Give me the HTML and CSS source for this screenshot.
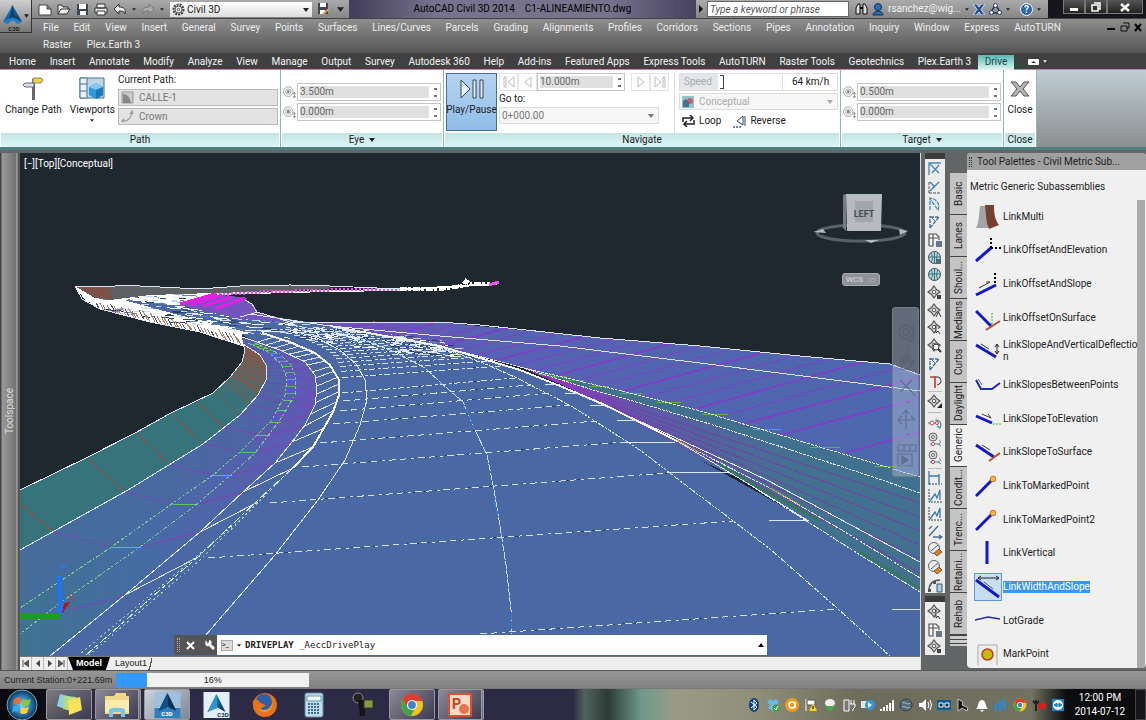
FILE: index.html
```
<!DOCTYPE html>
<html lang="en">
<head>
  <meta charset="UTF-8" />
  <meta name="viewport" content="width=device-width, initial-scale=1.0" />
  <title>AutoCAD Civil 3D 2014 - C1-ALINEAMIENTO.dwg</title>
  <link rel="stylesheet" href="styles.css">
</head>
<body>
  <svg class="sprite" aria-hidden="true">
    <defs>
      <linearGradient id="g-blue" x1="0" y1="0" x2="1" y2="1"><stop offset="0" stop-color="#3aa0e8"/><stop offset=".5" stop-color="#12619f"/><stop offset="1" stop-color="#06294f"/></linearGradient>
      <radialGradient id="g-orb"><stop offset="0" stop-color="#7cd4f5"/><stop offset=".6" stop-color="#2b78b0"/><stop offset="1" stop-color="#0d3357"/></radialGradient>
      <radialGradient id="g-fox"><stop offset="0" stop-color="#ffd54a"/><stop offset="1" stop-color="#e2600e"/></radialGradient>
    </defs>
    <symbol id="a-logo" viewBox="0 0 20 20"><path d="M10 0 20 18 10 13 0 18Z" fill="url(#g-blue)"/><path d="M10 0 13 15 10 13 7 15Z" fill="#0a3c70"/><path d="M0 18 10 13 20 18 15 20 10 16 5 20Z" fill="#1d7fc4"/></symbol>
    <symbol id="caret" viewBox="0 0 6 4"><path d="M0 0h6L3 4z" fill="currentColor"/></symbol>
    <symbol id="eye" viewBox="0 0 16 14"><g fill="none" stroke="#999"><circle cx="6" cy="6" r="5.500"/><circle cx="6" cy="6" r="3"/></g><circle cx="6" cy="6" r="1.600" fill="#777"/><path d="M13 7v6M11.500 9l1.500-2 1.500 2M11.500 11l1.500 2 1.500-2" fill="none" stroke="#888"/></symbol>
    <symbol id="s-diamond" viewBox="0 0 16 16"><path d="M7 1l2.500 3.500L13 7l-3.500 2.500L7 13 4.500 9.500 1 7l3.500-2.500z" fill="#d7dbe0" stroke="#555" stroke-width="1.200"/><circle cx="7" cy="7" r="1.800" fill="#fff" stroke="#555"/></symbol>
    <symbol id="s-line" viewBox="0 0 16 16"><path d="M2 14V3M2 14h12" stroke="#456" fill="none" stroke-dasharray="3 1"/><path d="M3 12 12 3M3 3l5 5" stroke="#3d79a8" stroke-width="1.300" fill="none"/></symbol>
    <symbol id="s-corner" viewBox="0 0 16 16"><path d="M2 14V2h12M3 3l9 9M5 12l7-8" stroke="#4684b4" stroke-width="1.300" fill="none"/></symbol>
    <symbol id="s-arc" viewBox="0 0 16 16"><path d="M3 14V2c8 1 10 8 8 12L3 3" stroke="#447ca8" stroke-width="1.200" fill="#dcecf7" stroke-dasharray="4 1"/></symbol>
    <symbol id="s-grid" viewBox="0 0 16 16"><path d="M2 14V2h7l3 3v3M2 6h9M6 2v12H2" fill="#f5f5f5" stroke="#555" stroke-width="1.200"/><path d="M9 9h6v6H9z" fill="#678"/></symbol>
    <symbol id="s-globe" viewBox="0 0 16 16"><circle cx="7.500" cy="7.500" r="6" fill="#aed6d4" stroke="#446" /><path d="M2 7h11M7.500 2v11M4 3c2 4 2 6 0 9M11 3c-2 4-2 6 0 9" stroke="#3b7680" fill="none"/></symbol>
    <symbol id="s-hook" viewBox="0 0 16 16"><path d="M3 3h5v11" stroke="#c33" stroke-width="1.600" fill="none"/><path d="M8 3c7-1 8 7 2 8" fill="none" stroke="#555" stroke-width="1.200"/></symbol>
    <symbol id="s-node" viewBox="0 0 16 16"><path d="M1 8h9M8 5c6 0 7 4 5 8l-3-2" stroke="#4583aa" stroke-width="1.200" fill="none"/><circle cx="5" cy="8" r="2" fill="#fff" stroke="#b44"/><circle cx="10" cy="8" r="1.500" fill="#fff" stroke="#b44"/></symbol>
    <symbol id="s-node2" viewBox="0 0 16 16"><circle cx="6" cy="5" r="4" fill="#ddd" stroke="#666"/><circle cx="6" cy="5" r="1.500" fill="#fff" stroke="#666"/><path d="M3 12h8c3 0 3-3 1-4M11 12l3 2" stroke="#4583aa" fill="none"/><circle cx="6" cy="12" r="1.600" fill="#fff" stroke="#b44"/></symbol>
    <symbol id="s-dim" viewBox="0 0 16 16"><path d="M2 1v14M12 4v9M2 6h10" stroke="#3d79a8" stroke-width="1.300" fill="none"/><path d="M2 14h13" stroke="#345" stroke-dasharray="2 1"/></symbol>
    <symbol id="s-dim2" viewBox="0 0 16 16"><path d="M2 1v13h13" stroke="#345" stroke-dasharray="2 1" fill="none"/><path d="M3 13 8 6l2 4 3-8v10" stroke="#3d79a8" stroke-width="1.300" fill="none"/></symbol>
    <symbol id="s-slant" viewBox="0 0 16 16"><path d="M2 12 11 2M2 5l3-3M6 13h9M12 11l3 2-3 2" stroke="#456f90" stroke-width="1.300" fill="none"/></symbol>
    <symbol id="s-flag" viewBox="0 0 16 16"><path d="M3 14V2M3 14 12 3M3 3h8" stroke="#456f90" stroke-width="1.300" fill="none" stroke-dasharray="4 1"/><path d="M4 3 8 7" stroke="#3d79a8"/></symbol>
    <symbol id="s-brush" viewBox="0 0 16 16"><circle cx="7" cy="7" r="5.500" fill="#eee" stroke="#666"/><path d="M4 10 11 4" stroke="#467"/><path d="M7 12l5-4 3 3-5 4z" fill="#d2862c" stroke="#853"/></symbol>
    <symbol id="s-calc" viewBox="0 0 16 16"><path d="M2 14C2 7 6 3 13 3" fill="none" stroke="#555" stroke-width="1.500"/><path d="M1 12h3v3H1zM6 4h3v3H6z" fill="#555"/><path d="M10 7h5v8h-5z" fill="#a9cee6" stroke="#357"/></symbol>
    <symbol id="win-a" viewBox="0 0 26 26"><path d="M0 0h26v26H0z" fill="#e4eef6"/><path d="M13 2 22 20 13 15 4 20Z" fill="url(#g-blue)"/><path d="M13 2 14 16 4 20Z" fill="#2b94cf"/></symbol>
    <symbol id="win-b" viewBox="0 0 26 26"><path d="M0 0h26v26H0z" fill="#9fc0dc"/><path d="M0 16h26v10H0z" fill="#2f7fc0"/><path d="M13 1 22 19 13 15 4 19Z" fill="#0b3358"/><path d="M13 1 14 15 4 19Z" fill="#134e83"/></symbol>
    <symbol id="chrome" viewBox="0 0 24 24"><circle cx="12" cy="12" r="11" fill="#f2c51d"/><path d="M2.500 6.500A11 11 0 0 1 22.500 8H12L7 14z" fill="#dc3d2c"/><path d="M2.500 6.500 7.500 14.500 14 17l-3 6A11 11 0 0 1 2.500 6.500" fill="#40a34b"/><circle cx="12" cy="12" r="5" fill="#fff"/><circle cx="12" cy="12" r="3.900" fill="#3b82cf"/></symbol>
  </svg>

  <header class="titlebar">
    <button class="app-button" aria-label="Application menu">
      <svg width="19" height="21"><use href="#a-logo"/></svg><b>C3D</b>
      <svg class="app-caret" width="5" height="4"><use href="#caret"/></svg>
    </button>
    <div class="quick-access">
      <button aria-label="New"><svg width="14" height="13" viewBox="0 0 14 13"><path d="M1 2h8l4 4v6H1zM9 2v4h4" fill="#fff" stroke="#444"/></svg></button>
      <button aria-label="Open"><svg width="14" height="13" viewBox="0 0 14 13"><path d="M1 11V2h4l1 2h5v2M1 11l3-5h9l-3 5z" fill="#eee" stroke="#333"/></svg></button>
      <button aria-label="Save"><svg width="13" height="13" viewBox="0 0 13 13"><path d="M1 1h11v11H1z" fill="#3c4650"/><path d="M3 1h7v5H3zM4 8h6v4H4z" fill="#fff"/></svg></button>
      <button aria-label="Plot"><svg width="14" height="13" viewBox="0 0 14 13"><path d="M3 1h8v4H3zM1 5h12v5H1z" fill="#eee" stroke="#333"/><path d="M3 8h8v4H3z" fill="#fff" stroke="#333"/></svg></button>
      <button aria-label="Undo"><svg width="14" height="12" viewBox="0 0 14 12"><path d="M1 6l5-5v3c5 0 7 2 6 7-1-3-3-3-6-3v3z" fill="#eee" stroke="#333"/></svg></button>
      <svg width="4" height="3"><use href="#caret"/></svg>
      <button aria-label="Redo"><svg width="14" height="12" viewBox="0 0 14 12"><path d="M13 6 8 1v3C3 4 1 6 2 11c1-3 3-3 6-3v3z" fill="#aaa" stroke="#777"/></svg></button>
      <svg width="4" height="3"><use href="#caret"/></svg>
    </div>
    <div class="workspace">
      <svg width="13" height="13" viewBox="0 0 13 13"><circle cx="6.500" cy="6.500" r="5" fill="none" stroke="#444" stroke-width="2" stroke-dasharray="2 1"/><circle cx="6.500" cy="6.500" r="3.500" fill="#fff" stroke="#444"/><circle cx="6.500" cy="6.500" r="1.200" fill="none" stroke="#444"/></svg>
      <select aria-label="Workspace"><option>Civil 3D</option></select>
      <svg width="6" height="4"><use href="#caret"/></svg>
    </div>
    <div class="quick-end">
      <svg width="13" height="14" viewBox="0 0 13 14"><path d="M1 1h10v11H1z" fill="#3c4650"/><path d="M3 1h6v4H3zM3 8h5v4H3z" fill="#fff"/><path d="M6 12l6-5" stroke="#e0a050" stroke-width="2"/></svg>
      <svg width="7" height="5"><use href="#caret"/></svg>
    </div>
    <div class="doc-title"><span>AutoCAD Civil 3D 2014</span><span>C1-ALINEAMIENTO.dwg</span></div>
    <div class="infocenter">
      <span class="info-arrow"></span>
      <input type="text" aria-label="Search" placeholder="Type a keyword or phrase">
      <svg width="13" height="12" viewBox="0 0 13 12"><path d="M1 11V5l2-4h2v10zM8 11V1h2l2 4v6z" fill="#ddd" stroke="#111"/><path d="M5 4h3v2H5z"/></svg>
      <svg width="12" height="13" viewBox="0 0 12 13"><circle cx="6" cy="4" r="3.500" fill="#2c6bc0" stroke="#134"/><path d="M1 12c0-5 10-5 10 0z" fill="#2c6bc0" stroke="#134"/></svg>
      <a href="#" class="user">rsanchez@wig...</a>
      <svg width="4" height="3"><use href="#caret"/></svg>
      <svg width="12" height="11" viewBox="0 0 12 11"><path d="M0 0h4l2 3 2-3h4L8 5.500 12 11H8L6 8l-2 3H0l4-5.500z" fill="#174f9c" stroke="#dde"/></svg>
      <svg width="13" height="12" viewBox="0 0 13 12"><path d="M6.500 2 12 10H1z" fill="none" stroke="#223a66" stroke-width="1.500"/><g fill="#fff" stroke="#223a66"><circle cx="6.500" cy="2.500" r="2"/><circle cx="2.500" cy="9.500" r="2"/><circle cx="10.500" cy="9.500" r="2"/></g></svg>
      <svg width="4" height="3"><use href="#caret"/></svg>
      <button class="help" aria-label="Help">?</button>
      <svg width="4" height="3"><use href="#caret"/></svg>
    </div>
    <div class="window-buttons">
      <button aria-label="Minimize"><svg width="10" height="10"><path d="M1 6h8v3H1z" fill="#fff"/></svg></button>
      <button aria-label="Restore"><svg width="10" height="10"><path d="M3 1h6v6H7M1 3h6v6H1z" fill="none" stroke="#fff" stroke-width="1.500"/></svg></button>
      <button class="win-close" aria-label="Close window"><svg width="10" height="10"><path d="M1 2l8 7M9 2 1 9" stroke="#fff" stroke-width="2.500"/></svg></button>
    </div>
  </header>

  <nav class="menubar">
    <div class="menu-row">
      <a href="#">File</a><a href="#">Edit</a><a href="#">View</a><a href="#">Insert</a><a href="#">General</a><a href="#">Survey</a><a href="#">Points</a><a href="#">Surfaces</a><a href="#">Lines/Curves</a><a href="#">Parcels</a><a href="#">Grading</a><a href="#">Alignments</a><a href="#">Profiles</a><a href="#">Corridors</a><a href="#">Sections</a><a href="#">Pipes</a><a href="#">Annotation</a><a href="#">Inquiry</a><a href="#">Window</a><a href="#">Express</a><a href="#">AutoTURN</a>
    </div>
    <div class="menu-row second"><a href="#">Raster</a><a href="#">Plex.Earth 3</a></div>
    <div class="doc-buttons">
      <svg width="9" height="10"><path d="M0 6h8v2H0z"/></svg>
      <svg width="10" height="10"><path d="M3 1h6v5H7M1 4h6v5H1z" fill="none" stroke="#111"/></svg>
      <svg width="8" height="10"><path d="M1 2l6 7M7 2 1 9" stroke="#000" stroke-width="2"/></svg>
    </div>
  </nav>

  <nav class="ribbon-tabs">
    <a href="#">Home</a><a href="#">Insert</a><a href="#">Annotate</a><a href="#">Modify</a><a href="#">Analyze</a><a href="#">View</a><a href="#">Manage</a><a href="#">Output</a><a href="#">Survey</a><a href="#">Autodesk 360</a><a href="#">Help</a><a href="#">Add-ins</a><a href="#">Featured Apps</a><a href="#">Express Tools</a><a href="#">AutoTURN</a><a href="#">Raster Tools</a><a href="#">Geotechnics</a><a href="#">Plex.Earth 3</a><a href="#" class="active">Drive</a>
    <span class="ribbon-toggle"><svg width="11" height="6"><rect width="11" height="6" rx="1" fill="#fff"/><path d="M3 4h5L5.500 2z" fill="#333"/></svg><svg width="4" height="3"><use href="#caret"/></svg></span>
  </nav>

  <section class="ribbon">
    <div class="panel panel-path">
      <div class="panel-body">
        <button class="big"><svg width="22" height="24" viewBox="0 0 22 24"><path d="M10 2h3v21h-3z" fill="#667" /><path d="M11 1h8l2 2-2 3h-8z" fill="#e9cf45" stroke="#886"/><path d="M12 6v4H3L1 8l2-2z" fill="#dde" stroke="#667"/></svg>Change Path</button>
        <button class="big"><svg width="26" height="24" viewBox="0 0 26 24"><path d="M1 1h24v20H1z" fill="#bcd6e8" stroke="#478"/><path d="M1 1h7v20H1zM1 7h7M1 14h7" fill="#eef" stroke="#478"/><path d="M10 10l7-4 7 4v8l-7 4-7-4z" fill="#2e97e0"/><path d="M10 10l7-4 7 4-7 3z" fill="#82c8f3"/><path d="M17 13l7-3v8l-7 4z" fill="#1c77bd"/></svg>Viewports<svg width="4" height="3"><use href="#caret"/></svg></button>
        <div class="field-stack">
          <label for="path">Current Path:</label>
          <div class="combo grey"><svg width="13" height="13" viewBox="0 0 13 13"><path d="M1 1h11v11H1z" fill="#ccc" stroke="#999"/><path d="M2 12V3c5 0 7 4 8 9z" fill="#888"/></svg><select id="path" disabled><option>CALLE-1</option></select></div>
          <div class="combo grey"><svg width="13" height="13" viewBox="0 0 13 13"><path d="M1 11c6 1 9-3 10-9M9 4l2-3 1 3M3 9l-2 2 2 1" fill="none" stroke="#999" stroke-width="1.200"/></svg><select aria-label="Code" disabled><option>Crown</option></select></div>
        </div>
      </div>
      <h2>Path</h2>
    </div>
    <div class="panel panel-eye">
      <div class="panel-body offsets">
        <label class="spin"><svg width="14" height="13"><use href="#eye"/></svg><span><input type="text" aria-label="Eye height" value="3.500m" disabled><i></i></span></label>
        <label class="spin"><svg width="14" height="13"><use href="#eye"/></svg><span><input type="text" aria-label="Eye offset" value="0.000m" disabled><i></i></span></label>
      </div>
      <h2>Eye <svg width="6" height="4"><use href="#caret"/></svg></h2>
    </div>
    <div class="panel panel-nav">
      <div class="panel-body">
        <button class="play"><svg width="24" height="20" viewBox="0 0 24 20"><path d="M1 1l9 9-9 9zM13 1h3v18h-3zM20 1h3v18h-3z" fill="#e4f0fb" stroke="#345"/></svg>Play/Pause</button>
        <div class="nav-goto">
          <div class="transport">
            <button aria-label="First"><svg width="12" height="12" viewBox="0 0 12 12"><path d="M1 1h2v10H1zM11 1v10L5 6z" fill="none" stroke="#bbb"/></svg></button>
            <button aria-label="Previous"><svg width="10" height="12" viewBox="0 0 10 12"><path d="M8 1v10L2 6z" fill="none" stroke="#bbb"/></svg></button>
            <span class="spin step"><span><input type="text" aria-label="Step" value="10.000m" disabled><i></i></span></span>
            <button aria-label="Next"><svg width="10" height="12" viewBox="0 0 10 12"><path d="M2 1v10l6-5z" fill="none" stroke="#bbb"/></svg></button>
            <button aria-label="Last"><svg width="12" height="12" viewBox="0 0 12 12"><path d="M1 1v10l6-5zM9 1h2v10H9z" fill="none" stroke="#bbb"/></svg></button>
          </div>
          <label for="goto">Go to:</label>
          <div class="combo"><select id="goto" disabled><option>0+000.00</option></select><svg width="6" height="4"><use href="#caret"/></svg></div>
        </div>
        <div class="nav-speed">
          <div class="speed"><label for="speed">Speed</label><input type="range" id="speed" min="0" max="100" value="41"><output for="speed">64 km/h</output></div>
          <div class="combo style"><svg width="12" height="12" viewBox="0 0 12 12"><path d="M0 0h12v12H0z" fill="#8fc4cd"/><circle cx="8" cy="5" r="3" fill="#d35c63"/><path d="M1 11V5l3-2 3 3v5z" fill="#44728c"/></svg><select aria-label="Visual style" disabled><option>Conceptual</option></select><svg width="6" height="4"><use href="#caret"/></svg></div>
          <div class="modes">
            <button><svg width="13" height="12" viewBox="0 0 13 12"><path d="M1 7V3h9M8 0l3 3-3 3M12 5v4H3M5 6 2 9l3 3" fill="none" stroke="#222" stroke-width="1.500"/></svg>Loop</button>
            <button><svg width="13" height="13" viewBox="0 0 13 13"><path d="M10 1v9L4 6zM12 1v10" fill="none" stroke="#345"/><path d="M0 12h8" stroke="#36c" stroke-dasharray="2 1" stroke-width="1.500"/></svg>Reverse</button>
          </div>
        </div>
      </div>
      <h2>Navigate</h2>
    </div>
    <div class="panel panel-eye">
      <div class="panel-body offsets">
        <label class="spin"><svg width="14" height="13"><use href="#eye"/></svg><span><input type="text" aria-label="Target height" value="0.500m" disabled><i></i></span></label>
        <label class="spin"><svg width="14" height="13"><use href="#eye"/></svg><span><input type="text" aria-label="Target offset" value="0.000m" disabled><i></i></span></label>
      </div>
      <h2>Target <svg width="6" height="4"><use href="#caret"/></svg></h2>
    </div>
    <div class="panel panel-close">
      <div class="panel-body"><button class="big"><svg width="20" height="24" viewBox="0 0 20 24"><path d="M1 5h5l4 5 4-5h5l-6 7 6 7h-5l-4-5-4 5H1l6-7z" fill="#b5b5b9" stroke="#555"/></svg>Close</button></div>
      <h2>Close</h2>
    </div>
  </section>

  <main>
    <aside class="toolspace"><span>Toolspace</span></aside>

    <section class="drawing">
      <div class="viewport">
        <svg class="scene" viewBox="20 153 900 503" preserveAspectRatio="xMinYMin slice">
          <defs>
            <linearGradient id="g-verge" x1="0" x2="1"><stop offset="0" stop-color="#3f7391"/><stop offset=".4" stop-color="#456ca3"/><stop offset="1" stop-color="#5f59b4"/></linearGradient>
            <linearGradient id="g-cut" gradientUnits="userSpaceOnUse" x1="560" y1="380" x2="780" y2="500"><stop offset="0" stop-color="#9038c4"/><stop offset=".35" stop-color="#5c5aa8"/><stop offset="1" stop-color="#42718f"/></linearGradient>
            <linearGradient id="g-side" x1="0" x2="1"><stop offset="0" stop-color="#7a4ab8"/><stop offset=".35" stop-color="#5762b3"/><stop offset="1" stop-color="#4c68ad"/></linearGradient>
            <linearGradient id="g-slope" gradientUnits="userSpaceOnUse" x1="230" y1="400" x2="262" y2="352"><stop offset="0" stop-color="#36737b"/><stop offset="1" stop-color="#80594f"/></linearGradient>
            <clipPath id="far-clip"><path d="M75 286 110 300 150 296 213 293 250 312 300 321 440 340 500 362 420 362 340 352 300 340 243 346 200 332 150 322 100 309 86 301Z"/></clipPath>
          </defs>
          <!-- road surface -->
          <path fill="#4a69a4" d="M20 550 128 490 240 415 258 345 243 335 180 305 250 312 440 346 520 370 605 405 700 460 807 520 920 592V656H20Z"/>
          <!-- verges and slopes -->
          <path fill="url(#g-side)" d="M250 314 295 322H440L600 338 700 346 800 356 890 364 920 375V480L780 437 697 410 630 393 520 367 440 346 330 326Z"/>
          <path fill="#40718f" d="M520 367 630 393 697 410 780 435 920 477V493L867 475 723 428 593 390Z"/>
          <path fill="url(#g-cut)" d="M520 367 593 390 640 403 723 428 867 475 920 493V592L857 553 807 520 742 480 700 460 605 405 560 384Z"/>
          <path fill="url(#g-verge)" d="M20 550 128 490 203 444 240 415 258 395 267 378 260 355 243 344 242 337 280 350 305 362 317 380 315 405 292 442 243 492 125 595 50 656H20Z"/>
          <path fill="#4a699f" opacity=".6" d="M20 550 128 490 203 444 240 415 258 395 267 378 260 355 280 368 287 390 272 420 240 452 173 503 110 548 20 608Z"/>
          <path fill="url(#g-slope)" d="M20 490 86 458 135 433 171 413 213 393 230 377 242 362 245 350 243 344 260 355 266 365 267 378 258 395 240 415 203 444 128 490 20 550Z"/>
          <!-- far end of the corridor -->
          <path fill="#5d6063" d="M75 286 110 287 120 285 200 289 240 286 290 285 330 286 330 289 213 294 110 300 88 298Z"/>
          <path fill="#7b5148" d="M75 286 110 288 112 299 90 301Z"/>
          <path fill="#fff" d="M75 286 95 298 110 300 150 295 213 293 180 305 242 322 290 330 242 334 243 346 200 332 150 322 100 309 84 299Z"/>
          <path fill="#4a69a4" d="M120 299 180 306 242 318 360 330 420 346 330 345 250 333 190 318Z"/>
          <path fill="none" stroke="#fff" stroke-width="2" d="M213 294 330 291 400 290 460 286 497 284"/>
          <path fill="none" stroke="#f050f0" stroke-width="3" stroke-dasharray="2 2" d="M215 295 260 292 330 290 400 289"/>
          <path fill="none" stroke="#fff" stroke-width="4" stroke-dasharray="7 1 3 2" d="M400 289 440 289 462 286 466 281 470 284 490 284"/>
          <path fill="none" stroke="#f050f0" stroke-width="3" d="M489 285 499 282"/>
          <g id="far-marks" clip-path="url(#far-clip)"></g>
          <path fill="#7455c0" d="M178 305 213 294 248 298 245 300 252 304 257 312 290 322 240 319Z"/>
          <path stroke="#e81ce8" stroke-width="3" d="M180 304 215 294M190 305 222 295M203 306 232 297M215 309 245 298" fill="none"/>
          <g id="marks"></g>
          <g class="outline">
            <path id="slope-out" d="M243 344 245 350 242 362 230 377 213 393 171 413 135 433 86 458 20 490"/>
            <path id="slope-in" d="M243 344 260 355 266 365 267 378 258 395 240 415 203 444 128 490 20 550"/>
            <path id="ditch-a" class="green" d="M248 343 268 352 281 364 287 378 285 395 272 420 240 452 213 475 173 503 110 548 20 608"/>
            <path id="ditch-b" class="green" d="M255 343 280 354 292 366 296 380 295 395 280 420 256 452 232 474 197 504 140 547 60 603 20 634"/>
            <path id="shoulder" d="M242 337 280 350 305 362 315 375 317 390 315 405 305 425 292 442 275 463 243 492 200 532 125 595 50 656"/>
            <path id="edge" class="bold" d="M262 333 290 342 315 353 330 365 339 380 339 395 333 412 313 447 293 468"/>
            <path d="M290 330 315 337 340 350 357 365 365 380 367 400 360 425 345 460 318 500 275 555 205 636"/>
            <path class="near-edge" d="M293 468 258 500 200 555 160 590 85 656"/>
            <path class="fine" d="M293 468 200 560 88 656M240 520 80 654"/>
            <path d="M75 286 110 287 120 285 200 289 240 286 290 285 330 286 400 289"/>
            <path d="M75 286 82 299 100 309 150 322 200 332 243 346"/>
            <path d="M245 300 252 304 257 312 290 322 M240 317 258 312"/>
            <path id="side-top" d="M290 322H440L480 325 600 338 700 346 800 356 890 364 920 375"/>
            <path id="side-mid" d="M250 314 330 326 440 336 560 346 700 363 850 382 920 391"/>
            <path id="side-low" class="dots" d="M440 346 520 367 630 393 697 410 780 435 920 477"/>
            <path class="dots" d="M520 367 593 390 640 403 723 428 800 453 867 475 920 493"/>
            <path class="bold" d="M330 326 440 346 520 370 560 386 605 405 677 441"/>
            <path d="M677 441 742 480 807 520M560 386 637 420 700 449 767 480 920 562"/>
            <path class="dots" d="M677 441 770 488 850 535 920 578M742 480 857 553 920 592"/>
            <path class="dots" d="M330 326 440 347 483 363 517 378 573 407 640 450 692 490 732 520 770 549 838 609 890 656"/>
            <path d="M617 420H637M590 405H605M565 393H580M545 384H560M667 472H730M769 520H809M892 609H920M625 442H675" />
          </g>
          <path fill="none" stroke="#2f7d4c" stroke-width="2" d="M720 464 760 488 820 521M860 552 920 588"/>
          <path fill="none" stroke="#d8a45c" d="M675 439 700 453M770 488 800 505"/>
          <path class="centre" d="M290 325 350 335 395 352 425 368 440 382 463 402 475 430 487 455 494 490 499 520 506 565 511 610 512 634"/>
          <path class="centre blue" d="M350 340 360 344M466 408 475 430M494 500 498 515M511 612 512 630"/>
          <!-- ucs icon -->
          <path stroke="#18a018" stroke-width="5" d="M20 617 60 616"/><path stroke="#1f75f0" stroke-width="5" d="M59 576 61 614"/><path d="M62 614 64 603 70 602Z" fill="#b01818"/>
          <path d="M58 565H68L58 569" fill="none" stroke="#2a78e8"/><path d="M68 600l6-6M68 594l6 8" fill="none" stroke="#a04060"/>
        </svg>
        <span class="view-label">[&minus;][Top][Conceptual]</span>
        <svg class="viewcube" width="98" height="54" viewBox="0 0 98 54">
          <ellipse cx="49" cy="40" rx="44" ry="8" fill="none" stroke="#59616a" stroke-width="3"/><path d="M1 39l10-3 3 4zM87 36l9 2-8 4zM53 47l14 0-8 3z" fill="#b5b9bd"/>
          <path d="M31 2 34 1V38l-3-3z" fill="#777c81"/><path d="M34 1h36l-1 37H35z" fill="#b7bbbf"/><path d="M43 8h18v21H43z" fill="#a2a7ab"/><text x="52" y="24" text-anchor="middle">LEFT</text>
        </svg>
        <button class="wcs">WCS <span></span></button>
        <div class="navbar">
          <svg width="22" height="160" viewBox="0 0 22 160" fill="none" stroke="#555a68" stroke-width="1.200" opacity=".6"><circle cx="10" cy="18" r="7"/><circle cx="10" cy="18" r="3"/><path d="M17 12v14M11 27h8M10 35h3M5 55V46l3 4V42h2v6-8h2v8-6h2v7l3-2-4 8zM4 66l12 12M16 66 4 78M16 78l3 4M10 88h3M10 96v20M2 106h17M10 96l-3 4M10 96l3 4M2 106l4-4M2 106l4 4M19 106l-4-4M10 120h3M2 131h18v6H2zM8 131v6M14 131v6M2 140h14v12H2z"/><path d="M6 142v8l6-4z" fill="#555a68"/></svg>
        </div>
        <div class="command">
          <div class="command-grip"><i></i><svg width="9" height="9"><path d="M1 1l7 7M8 1 1 8" stroke="#fff" stroke-width="2"/></svg><svg width="12" height="12" viewBox="0 0 12 12"><path d="M2 1l1 3 2-1v-2c3 0 3 3 2 4l4 4-2 2-4-4C2 8 0 5 2 1" fill="#fff"/></svg></div>
          <span class="prompt">&gt;_</span><svg width="4" height="3"><use href="#caret"/></svg>
          <p><b>DRIVEPLAY</b> _AeccDrivePlay</p>
          <svg width="6" height="4" viewBox="0 0 6 4"><path d="M0 4h6L3 0z"/></svg>
        </div>
      </div>
      <nav class="layouts">
        <button aria-label="First layout"><svg width="7" height="7"><path d="M1 0v7M7 0v7L2 3.500z" stroke="#555" fill="#555"/></svg></button><button aria-label="Previous layout"><svg width="6" height="7"><path d="M5 0v7L1 3.500z" fill="#444"/></svg></button><button aria-label="Next layout"><svg width="6" height="7"><path d="M1 0v7l4-3.500z" fill="#444"/></svg></button><button aria-label="Last layout"><svg width="7" height="7"><path d="M0 0v7l5-3.500zM6 0v7" stroke="#555" fill="#555"/></svg></button>
        <a href="#" class="model">Model</a><a href="#" class="layout">Layout1</a>
      </nav>
    </section>

    <aside class="side-tools">
      <div class="strip long">
        <svg><use href="#s-corner"/></svg><svg><use href="#s-line"/></svg><svg><use href="#s-arc"/></svg><svg><use href="#s-flag"/></svg><svg><use href="#s-grid"/></svg><svg><use href="#s-globe"/><path d="M9 9h5v5H9z" fill="#567"/></svg><svg><use href="#s-globe"/></svg><svg><use href="#s-diamond"/><path d="M10 10h4v4h-4z" fill="#444"/></svg><svg><use href="#s-diamond"/><path d="M9 14l2.500-5 2.500 5" fill="none" stroke="#333"/></svg><svg><use href="#s-diamond"/><path d="M9 5v8l2-2 2 3" fill="#fff" stroke="#333"/></svg><svg><use href="#s-diamond"/><circle cx="9" cy="9" r="3" fill="#fff" stroke="#333"/><path d="M11 11l3 3" stroke="#333" stroke-width="2"/></svg><svg><use href="#s-flag"/></svg><svg><use href="#s-hook"/></svg>
        <hr>
        <svg><use href="#s-diamond"/><path d="M10 14h5V9z" fill="#222"/></svg>
        <hr>
        <svg><use href="#s-node"/></svg><svg><use href="#s-node2"/></svg><svg><use href="#s-node2"/></svg>
        <hr>
        <svg><use href="#s-dim"/></svg><svg><use href="#s-dim2"/></svg><svg><use href="#s-dim2"/></svg><svg><use href="#s-slant"/></svg><svg><use href="#s-brush"/></svg><svg><use href="#s-brush"/></svg><svg><use href="#s-calc"/></svg>
      </div>
      <div class="strip">
        <svg><use href="#s-diamond"/><path d="M9 6v8l2-2 2 3" fill="#fff" stroke="#333"/></svg><svg><use href="#s-grid"/></svg><svg><use href="#s-diamond"/><path d="M10 10h4v4h-4z" fill="#444"/></svg>
      </div>
    </aside>

    <aside class="palettes">
      <nav class="palette-tabs">
        <a href="#">Basic</a><a href="#">Lanes</a><a href="#">Shoul...</a><a href="#">Medians</a><a href="#">Curbs</a><a href="#">Daylight</a><a href="#" class="active">Generic</a><a href="#">Condit...</a><a href="#">Trenc...</a><a href="#">Retaini...</a><a href="#">Rehab</a>
        <span class="more"></span>
      </nav>
      <div class="palette">
        <header><i></i>Tool Palettes - Civil Metric Sub...</header>
        <h3>Metric Generic Subassemblies</h3>
        <ul>
          <li><svg viewBox="0 0 26 26"><path d="M5 2h8v22H1C4 18 4 10 5 2" fill="#a4a4a4"/><path d="M10 1h9c0 9 1 15 5 20l-10 4C11 18 11 10 10 1" fill="#74402f"/></svg><span>LinkMulti</span></li>
          <li><svg viewBox="0 0 26 26"><path class="link" d="M1 24 16 11"/><path d="M16 11V1M16 11h10" stroke="#000" stroke-width="2" stroke-dasharray="2 2"/></svg><span>LinkOffsetAndElevation</span></li>
          <li><svg viewBox="0 0 26 26"><path class="link" d="M1 24 21 14"/><path d="M4 17 15 11l-4 0" fill="none" stroke="#333"/><path d="M20 12V0" stroke="#000" stroke-width="2" stroke-dasharray="2 2"/></svg><span>LinkOffsetAndSlope</span></li>
          <li><svg viewBox="0 0 26 26"><path class="link" d="M1 6 16 21"/><path d="M17 19V7" stroke="#3b3" stroke-dasharray="2 1"/><path d="M11 25 25 16" stroke="#b0532d" stroke-width="2"/></svg><span>LinkOffsetOnSurface</span></li>
          <li><svg viewBox="0 0 26 26"><path class="link" d="M1 7 21 19"/><path d="M6 6l8 5" stroke="#333"/><path d="M22 6v10M20 9l2-3 2 3M20 13l2 3 2-3" fill="none" stroke="#222"/></svg><span>LinkSlopeAndVerticalDeflectio<wbr>n</span></li>
          <li><svg viewBox="0 0 26 26"><path d="M1 8 6 17H17L25 11" fill="none" stroke="#1c28b8" stroke-width="2"/><path d="M3 7l4 6" stroke="#667"/></svg><span>LinkSlopesBetweenPoints</span></li>
          <li><svg viewBox="0 0 26 26"><path class="link" d="M1 10 17 17"/><path d="M7 8l9 4-3-4" stroke="#333" fill="none"/><path d="M18 18h8" stroke="#3b3" stroke-dasharray="2 1"/></svg><span>LinkSlopeToElevation</span></li>
          <li><svg viewBox="0 0 26 26"><path class="link" d="M1 6 19 18"/><path d="M7 6l8 5" stroke="#333"/><path d="M14 22 25 14" stroke="#b0532d" stroke-width="2"/></svg><span>LinkSlopeToSurface</span></li>
          <li><svg viewBox="0 0 26 26"><path class="link" d="M1 23 17 7"/><circle cx="18" cy="6" r="2.800" fill="#ffb348" stroke="#c77217"/></svg><span>LinkToMarkedPoint</span></li>
          <li><svg viewBox="0 0 26 26"><path class="link" d="M1 23 17 7"/><circle cx="18" cy="6" r="2.800" fill="#ffb348" stroke="#c77217"/></svg><span>LinkToMarkedPoint2</span></li>
          <li><svg viewBox="0 0 26 26"><path class="link" d="M12 1V24"/></svg><span>LinkVertical</span></li>
          <li class="selected"><svg viewBox="0 0 26 26"><path d="M3 4H24M6 2 3 4l3 2M21 2l3 2-3 2" fill="none" stroke="#222"/><path class="link" d="M1 6 24 23"/><path d="M9 8l9 7" stroke="#555"/></svg><span>LinkWidthAndSlope</span></li>
          <li><svg viewBox="0 0 26 26"><path d="M0 12 13 9 25 11" fill="none" stroke="#2429a8" stroke-width="1.500"/></svg><span>LotGrade</span></li>
          <li><svg viewBox="0 0 26 26"><path d="M3 24V4h19v20" fill="#eee" stroke="#aaa"/><circle cx="12.500" cy="13.500" r="5.500" fill="#c3bd10" stroke="#c43d16" stroke-width="1.500"/></svg><span>MarkPoint</span></li>
        </ul>
      </div>
    </aside>
  </main>

  <div class="statusbar">
    <label for="station">Current Station:0+221.69m</label>
    <div class="progress"><progress id="station" max="100" value="16"></progress><span>16%</span></div>
  </div>

  <footer class="taskbar">
    <div class="tasks">
      <button aria-label="Start"><svg width="32" height="32" viewBox="0 0 32 32"><circle cx="16" cy="16" r="15" fill="url(#g-orb)" stroke="#7fa6bd"/><path d="M8 10q4-3 7-1l-1 6q-4-2-7 1z" fill="#ee6a2f"/><path d="M17 10q4 2 8 0l-2 6q-4 2-7 0z" fill="#8cc63f"/><path d="M7 18q4-3 7-1l-2 6q-3-2-6 1z" fill="#3ba9e8"/><path d="M15 18q4 2 8 0l-2 6q-4 2-7 0z" fill="#f8cf3c"/></svg></button>
      <button class="open" aria-label="Sticky Notes"><svg width="28" height="24" viewBox="0 0 28 24"><path d="M5 1l12 3-4 13-11-4z" fill="#8ed0e8"/><path d="M9 3l12 1-1 14-12-2z" fill="#b5dc82"/><path d="M13 7l12-3 2 13-13 5z" fill="#f8e25a"/></svg></button>
      <button class="open stacked" aria-label="Explorer"><svg width="28" height="26" viewBox="0 0 28 26"><path d="M2 4h9l2-3h10v3h3v18H2z" fill="#f2d98a"/><path d="M2 8h24v12H2z" fill="#fbecae"/><path d="M6 25v-7c0-3 16-3 16 0v7h-4v-5h-8v5z" fill="#7fc4e4"/></svg></button>
      <button class="open current" aria-label="Civil 3D"><svg width="27" height="26"><use href="#win-b"/><text class="tile-name" x="13" y="24" text-anchor="middle">C3D</text></svg></button>
      <button aria-label="Civil 3D"><svg width="27" height="26"><use href="#win-a"/><text class="tile-name" x="20" y="25" text-anchor="middle">C3D</text></svg></button>
      <button aria-label="Firefox"><svg width="26" height="26" viewBox="0 0 26 26"><circle cx="13" cy="13" r="12" fill="url(#g-fox)"/><circle cx="12" cy="10" r="8" fill="#2e5fa8"/><path d="M1 9c2-2 4-2 6 0 1 3 5 2 7 5-4 0-4 4-8 3 4 5 12 4 14-2 1-4 0-7-2-9 6 4 8 10 3 15-8 8-22 2-20-12" fill="#e8741a"/></svg></button>
      <button aria-label="Calculator"><svg width="20" height="26" viewBox="0 0 20 26"><rect x="1" y="1" width="18" height="24" rx="2" fill="#c4dbe9" stroke="#5e88a5"/><path d="M3 4h14v5H3z" fill="#eef8ff" stroke="#69a"/><path d="M4 12h12M4 15h12M4 18h12M4 21h12" stroke="#39709c" stroke-width="2" stroke-dasharray="2 1"/></svg></button>
      <button aria-label="Camera"><svg width="24" height="26" viewBox="0 0 24 26"><circle cx="7" cy="6" r="5" fill="#222" stroke="#889"/><path d="M7 8h7v16H9z" fill="#151515"/><path d="M13 8h9v8h-9z" fill="#8a9a44" stroke="#333"/></svg></button>
      <button class="open" aria-label="Chrome"><svg width="24" height="24"><use href="#chrome"/></svg></button>
      <button class="open stacked" aria-label="PowerPoint"><svg width="24" height="24" viewBox="0 0 24 24"><rect width="24" height="24" rx="2" fill="#d9522a"/><path d="M2 2h20v20H2z" fill="#f6d9cb"/><circle cx="16" cy="16" r="5" fill="#e8744a"/><text x="4" y="16">P</text></svg></button>
    </div>
    <div class="tray">
      <svg viewBox="0 0 14 14"><ellipse cx="7" cy="7" rx="5" ry="7" fill="#14457d"/><path d="M4 4l6 5-3 3V2l3 3-6 5" fill="none" stroke="#fff"/></svg>
      <svg viewBox="0 0 14 14"><path d="M1 4l3-3 3 2 3-2 3 3-3 3 2 4-5 2-5-3 2-3z" fill="#6cb9e6"/><circle cx="10" cy="10" r="3.500" fill="#3ca33c"/><path d="M8 10l2 2 2-4" fill="none" stroke="#fff"/></svg>
      <svg viewBox="0 0 14 14"><circle cx="7" cy="7" r="7" fill="#f09a1c"/><circle cx="7" cy="7" r="3" fill="none" stroke="#fff" stroke-width="1.500"/><path d="M10 4v6" stroke="#fff" stroke-width="1.500"/></svg>
      <svg viewBox="0 0 14 14"><path d="M2 1v12" stroke="#fff"/><path d="M3 2h8v5H3z" fill="#fff" stroke="#555"/><path d="M9 5l4 8H5z" fill="#f5d322"/><path d="M9 8v3" stroke="#000"/></svg>
      <svg viewBox="0 0 14 14"><ellipse cx="7" cy="5" rx="5" ry="4" fill="#eee"/><path d="M2 8h10l-5 6z" fill="#42a848"/></svg>
      <svg viewBox="0 0 14 14"><path d="M2 2h5v11H2zM9 2v4M12 2v4M8 6h5v3l-2 2v2" fill="#777" stroke="#fff"/></svg>
      <svg viewBox="0 0 14 14"><path d="M0 3h8v7H0z" fill="#dfe7ee"/><circle cx="9" cy="7" r="5" fill="#3795d8"/><path d="M7 4l4 3-4 3" fill="#d8f0ff"/></svg>
      <svg viewBox="0 0 14 14"><path d="M1 13v-2M4 13V9M7 13V7M10 13V5M13 13V2" stroke="#fff" stroke-width="2"/></svg>
      <svg viewBox="0 0 14 14"><circle cx="7" cy="7" r="6" fill="#526b74" stroke="#2a4450"/><path d="M3 5c3-2 5 3 8 0M3 9c3-2 5 3 8 0" fill="none" stroke="#a5c2c9"/></svg>
      <svg viewBox="0 0 14 14"><path d="M1 5h3l4-4v12L4 9H1z" fill="#fff"/><path d="M10 4q2 3 0 6M12 2q3 5 0 10" fill="none" stroke="#fff"/></svg>
      <svg viewBox="0 0 14 14"><path d="M0 2h14v10H0z" fill="#0e5a87"/><path d="M2 5h4v4H2zM8 5h4v4H8z" fill="#103048" stroke="#fff"/></svg>
      <svg viewBox="0 0 14 14"><path d="M2 1l5 3-1 3 6 3-1 3-5-3-4 3z" fill="#111" stroke="#ddd" stroke-width=".8"/></svg>
      <svg viewBox="0 0 14 14"><path d="M1 11c3-2 1-8 6-9 5 1 3 7 6 9zM5 12h4l-2 2z" fill="#fff"/></svg>
      <svg viewBox="0 0 14 14"><path d="M2 13V6M6 13V3M10 11V1" stroke="#3387cb" stroke-width="3"/></svg>
      <svg viewBox="0 0 14 14"><use href="#chrome"/></svg>
      <svg viewBox="0 0 14 14"><path d="M4 2v11M1 3l3 3 3-3" stroke="#222" stroke-width="2" fill="none"/><path d="M6 5h8v6H6z" fill="#d02020"/></svg>
      <svg viewBox="0 0 14 14"><path d="M1 1h12v12H1z" fill="#1681d1"/><circle cx="7" cy="7" r="5" fill="#fff"/><path d="M3 7l3-2v4zM11 7 8 5v4zM5 7h4" fill="#1681d1" stroke="#1681d1"/></svg>
    </div>
    <div class="clock"><time>12:00 PM</time><time>2014-07-12</time></div>
    <button class="show-desktop" aria-label="Show desktop"></button>
  </footer>

  <script src="script.js"></script>
</body>
</html>
```
FILE: styles.css
```
* {
  box-sizing: border-box;
}

body {
  margin: 0;
  height: 100vh;
  display: flex;
  flex-direction: column;
  overflow: hidden;
  font-family: Roboto, "Open Sans", sans-serif;
  font-size: 10px;
  line-height: 14px;
  color: #222;
  background: #5d6060;
}

a {
  color: inherit;
  text-decoration: none;
}

button, input, select {
  font: inherit;
  color: inherit;
  padding: 0;
  border: none;
  background: none;
}

select {
  appearance: none;
  flex: 1;
  min-width: 0;
  opacity: 1;
}

svg {
  display: block;
  flex: none;
}

h2, h3, p, ul {
  margin: 0;
  padding: 0;
  font-size: 10px;
  font-weight: normal;
}

.sprite {
  position: absolute;
  width: 0;
  height: 0;
}

/* title bar */
.titlebar {
  position: relative;
  display: flex;
  align-items: stretch;
  height: 19px;
  flex: none;
  background: linear-gradient(#aaa, #858585);
  border-bottom: 1px solid #444;
}

.app-button {
  position: absolute;
  left: 0;
  top: 0;
  z-index: 2;
  width: 32px;
  height: 33px;
  padding: 3px 0 0 3px;
  background: linear-gradient(#d0d0d0, #777);
  border: 1px solid #333;
  border-width: 0 1px 1px 0;
  text-align: left;
}

.app-button b {
  display: block;
  width: 22px;
  font-size: 6px;
  line-height: 7px;
  text-align: center;
}

.app-caret {
  position: absolute;
  right: 2px;
  top: 14px;
}

.quick-access {
  display: flex;
  align-items: center;
  gap: 5px;
  width: 170px;
  padding-left: 38px;
}

.quick-access button {
  display: flex;
}

.workspace {
  display: flex;
  align-items: center;
  gap: 2px;
  width: 142px;
  padding: 0 3px 0 2px;
  margin: 2px 0 1px;
  background: linear-gradient(#fff, #ddd);
}

.quick-end {
  display: flex;
  align-items: center;
  gap: 7px;
  padding: 0 5px;
}

.doc-title {
  flex: 1;
  display: flex;
  justify-content: center;
  align-items: center;
  gap: 10px;
  background: linear-gradient(90deg, #413d5a, #77738c 25%, #77738c 75%, #45415f);
  color: #000;
}

.infocenter {
  display: flex;
  align-items: center;
  gap: 4px;
  width: 352px;
}

.info-arrow {
  border: 4px solid transparent;
  border-left-color: #111;
  border-right: 0;
  margin-left: 3px;
}

.infocenter input {
  width: 142px;
  height: 16px;
  padding-left: 2px;
  margin-right: 2px;
  background: #fff;
  border: 1px solid #666;
  font-style: italic;
}

.infocenter input::placeholder {
  color: #555;
}

.user {
  color: #f2f2f2;
}

.help {
  width: 13px;
  height: 13px;
  margin-left: 6px;
  border-radius: 50%;
  background: #2a63ae;
  border: 1px solid #fff;
  color: #fff;
  font-weight: bold;
  line-height: 11px;
}

.window-buttons {
  display: flex;
  width: 98px;
  padding: 0 3px 4px 15px;
  background: #16161c;
}

.window-buttons button {
  display: flex;
  justify-content: center;
  align-items: center;
  width: 22px;
  background: linear-gradient(#555, #222);
  border: 1px solid #777;
  border-top: 0;
}

.window-buttons .win-close {
  width: 36px;
}

/* menus */
.menubar {
  position: relative;
  height: 34px;
  flex: none;
  padding-top: 2px;
  background: linear-gradient(#8e8e8e, #555);
  color: #eee;
}

.menu-row {
  display: flex;
  justify-content: space-between;
  margin: 0 85px 0 43px;
  line-height: 14px;
}

.menu-row.second {
  justify-content: flex-start;
  gap: 15px;
  padding-top: 3px;
}

.doc-buttons {
  position: absolute;
  right: 4px;
  top: 3px;
  display: flex;
  gap: 4px;
}

.ribbon-tabs {
  display: flex;
  justify-content: space-between;
  height: 17px;
  flex: none;
  padding: 1px 99px 0 9px;
  background: #404040;
  border-bottom: 1px solid #58bab2;
  color: #f4f4f4;
  line-height: 15px;
}

.ribbon-tabs .active {
  margin: 1px 0 -1px -7px;
  padding: 0 7px;
  background: linear-gradient(#54b9b3, #e6f6f6);
  color: #1b4a48;
  line-height: 14px;
}

.ribbon-toggle {
  display: flex;
  align-items: center;
  gap: 4px;
}

/* ribbon */
.ribbon {
  display: flex;
  height: 80px;
  flex: none;
  background: linear-gradient(#bfcdd4, #8c8f90);
  border-bottom: 3px solid #4e7f7c;
}

.panel {
  display: flex;
  flex-direction: column;
  flex: none;
  background: #fff;
  border: 1px solid #8fb8b6;
  border-width: 0 1px 0 0;
}

.panel-path { width: 281px; }
.panel-eye { width: 163px; }
.panel-nav { width: 397px; }
.panel-close { width: 33px; }

.panel h2 {
  display: flex;
  justify-content: center;
  align-items: center;
  gap: 5px;
  height: 14px;
  margin: 0 1px;
  background: linear-gradient(#c3e4e6, #dcf6f6);
}

.panel-body {
  flex: 1;
  display: flex;
  padding: 3px 2px 0;
}

.big {
  display: flex;
  flex-direction: column;
  align-items: center;
  gap: 2px;
  padding: 4px 3px 0;
  line-height: 14px;
  white-space: nowrap;
}

.panel-path .big + .big {
  padding-left: 5px;
}

.panel-close .panel-body {
  justify-content: center;
}

.field-stack {
  width: 160px;
  display: flex;
  flex-direction: column;
  gap: 2px;
  margin-left: auto;
}

.combo {
  display: flex;
  align-items: center;
  gap: 5px;
  height: 17px;
  padding: 0 4px 0 2px;
  border: 1px solid #ddd;
  background: #f6f6f6;
  color: #777;
}

.combo.grey {
  background: #e3e3e3;
  border-color: #bbb;
}

.offsets {
  flex-direction: column;
  gap: 2px;
  padding: 13px 2px 0 2px;
}

.spin {
  display: flex;
  align-items: center;
}

.spin > span {
  flex: 1;
  min-width: 0;
  display: flex;
  align-items: center;
  height: 18px;
  padding: 2px;
  border: 1px solid #c4c4c4;
}

.spin input {
  flex: 1;
  min-width: 0;
  height: 12px;
  background: #e0e0e0;
  color: #666;
}

.spin i {
  flex: none;
  width: 5px;
  height: 12px;
  margin: 0 0 0 4px;
  background: linear-gradient(#777, #777) 50% 2px / 3px 2px no-repeat,
    linear-gradient(#777, #777) 50% 9px / 3px 2px no-repeat;
}

.play {
  display: flex;
  flex-direction: column;
  align-items: center;
  gap: 5px;
  width: 51px;
  height: 58px;
  padding-top: 5px;
  background: linear-gradient(#b7d4f2, #90bde9);
  border: 1px solid #3f6f9f;
  line-height: 12px;
}

.nav-goto {
  display: flex;
  flex-direction: column;
  gap: 1px;
  width: 170px;
  margin: 0 5px 0 2px;
}

.nav-goto .combo {
  width: 160px;
}

.transport {
  display: flex;
}

.transport button {
  display: flex;
  justify-content: center;
  align-items: center;
  flex: none;
  width: 19px;
  border: 1px solid #e4e4e4;
}

.transport .step {
  flex: 1;
  min-width: 0;
  margin-right: 6px;
}

.nav-speed {
  flex: 1;
  min-width: 0;
  display: flex;
  flex-direction: column;
  gap: 2px;
  padding-left: 4px;
  border-left: 1px solid #ddd;
}

.speed {
  position: relative;
  display: flex;
  height: 18px;
  border: 1px solid #ddd;
}

.speed label {
  position: absolute;
  left: 4px;
  top: 1px;
  color: #aaa;
}

.speed input {
  appearance: none;
  flex: 1;
  min-width: 0;
  margin: 0;
  background: linear-gradient(#e2e5ea, #e2e5ea) no-repeat 0 0 / 38px 100%;
}

.speed input::-webkit-slider-thumb {
  appearance: none;
  width: 4px;
  height: 14px;
  border: 1px solid #444;
  border-left: 0;
}

.speed output {
  flex: none;
  width: 55px;
  padding-left: 9px;
  border-left: 1px solid #ddd;
  line-height: 16px;
}

.style {
  color: #aaa;
}

.modes {
  display: flex;
  gap: 12px;
  padding: 2px 3px;
}

.modes button {
  display: flex;
  align-items: center;
  gap: 4px;
}

/* work area */
main {
  flex: 1;
  min-height: 0;
  display: flex;
  padding-top: 3px;
  background: #626666;
}

.toolspace {
  display: flex;
  align-items: center;
  justify-content: center;
  width: 20px;
  flex: none;
  background: linear-gradient(90deg, #444 1px, #999 2px, #727272 16px, #bbb 17px, #555 18px);
  color: #ddd;
}

.toolspace span, .palette-tabs a {
  writing-mode: vertical-rl;
  transform: rotate(180deg);
}

.drawing {
  flex: 1;
  min-width: 0;
  display: flex;
  flex-direction: column;
  border-right: 1px solid #ddd;
}

.viewport {
  position: relative;
  flex: 1;
  min-height: 0;
  overflow: hidden;
  background: #1f272f;
}

.scene {
  width: 100%;
  height: 100%;
  shape-rendering: crispEdges;
}

.outline path, .centre {
  fill: none;
  stroke: #dde6f2;
}

.outline .bold {
  stroke: #f4f6ea;
  stroke-width: 2;
}

.outline .green {
  stroke: #7fd08a;
  stroke-dasharray: 4 2 2 2;
}

.outline .dots {
  stroke-dasharray: 3 1;
}

.outline .near-edge {
  stroke: #d4ece4;
  stroke-dasharray: 9 3 4 2;
}

.outline .fine {
  stroke: #a9cfb5;
  stroke-dasharray: 2 3;
}

.centre {
  stroke-dasharray: 8 1;
  stroke: #c4dcf0;
}

.centre.blue {
  stroke: #2a84d8;
}

.view-label {
  position: absolute;
  left: 4px;
  top: 4px;
  color: #fff;
}

.viewcube {
  position: absolute;
  right: 10px;
  top: 40px;
}

.viewcube text {
  font-size: 9px;
  font-weight: bold;
  fill: #444b52;
}

.wcs {
  position: absolute;
  right: 40px;
  top: 120px;
  width: 38px;
  height: 13px;
  border-radius: 3px;
  border: 1px solid #aaa;
  background: #8f9198;
  color: #ddd;
  font-size: 8px;
  line-height: 11px;
  text-align: left;
  padding-left: 3px;
}

.wcs span {
  display: inline-block;
  width: 6px;
  height: 4px;
  margin-left: 4px;
  border: 1px solid #aaa;
}

.navbar {
  position: absolute;
  right: 1px;
  top: 154px;
  width: 27px;
  height: 170px;
  padding: 6px 3px;
  border-radius: 3px;
  border: 1px solid #777d88;
  background: rgba(180, 190, 210, 0.45);
}

.command {
  position: absolute;
  left: 17%;
  right: 17%;
  margin-left: 1px;
  bottom: 1px;
  height: 20px;
  display: flex;
  align-items: center;
  gap: 4px;
  padding-right: 3px;
  background: #fff;
  color: #222;
}

.command-grip {
  display: flex;
  align-items: center;
  gap: 9px;
  width: 43px;
  height: 20px;
  padding-left: 3px;
  background: #555;
}

.command-grip i {
  width: 3px;
  height: 14px;
  margin-right: -3px;
  border-left: 1px dotted #aaa;
  border-right: 1px dotted #aaa;
}

.prompt {
  width: 12px;
  height: 11px;
  background: #ddd;
  border: 1px solid #aaa;
  font-size: 7px;
  line-height: 8px;
}

.command p {
  flex: 1;
  font-family: "DejaVu Sans Mono", monospace;
  font-size: 9px;
}

.layouts {
  display: flex;
  height: 14px;
  flex: none;
  border-top: 1px solid #777;
  background: #eee;
  line-height: 13px;
}

.layouts button {
  display: flex;
  justify-content: center;
  align-items: center;
  width: 12px;
  border-right: 1px solid #bbb;
}

.layouts a {
  width: 42px;
  text-align: center;
  font-family: "Liberation Sans", sans-serif;
  font-size: 9px;
}

.model {
  background: #000;
  color: #fff;
  font-weight: bold;
  clip-path: polygon(0 0, 100% 0, 90% 100%, 12% 100%);
}

.layout {
  background: linear-gradient(105deg, transparent 92%, #555 92%, #555 95%, transparent 95%);
}

/* vertical tool strip */
.side-tools {
  display: flex;
  flex-direction: column;
  gap: 3px;
  width: 29px;
  flex: none;
  padding: 0 5px 15px 4px;
}

.strip {
  display: flex;
  flex-direction: column;
  justify-content: space-between;
  align-items: center;
  height: 59px;
  padding: 2px 0 0;
  border-top: 6px solid #3c3c3c;
  background: #ececec;
}

.strip.long {
  flex: 1;
  min-height: 0;
}

.strip svg {
  width: 16px;
  height: 16px;
}

.strip hr {
  width: 14px;
  margin: 0;
  border: 0;
  border-top: 1px solid #bbb;
}

/* tool palettes */
.palettes {
  display: flex;
  width: 196px;
  flex: none;
  padding-bottom: 2px;
}

.palette-tabs {
  width: 17px;
  padding-top: 20px;
}

.palette-tabs a {
  display: block;
  width: 17px;
  height: 42px;
  border-top: 1px solid #444;
  background: #c4c4c4;
  line-height: 17px;
  text-align: center;
  white-space: nowrap;
}

.palette-tabs a.active {
  background: #f0f0f0;
}

.more {
  display: block;
  height: 11px;
  background: repeating-linear-gradient(#444 0 1px, #ccc 1px 4px);
}

.palette {
  flex: 1;
  min-width: 0;
  display: flex;
  flex-direction: column;
  border-radius: 4px;
  background: #f0f0f0;
  overflow: hidden;
}

.palette header {
  display: flex;
  align-items: center;
  gap: 5px;
  height: 17px;
  padding-left: 2px;
  background: #a0a0a0;
}

.palette header i {
  width: 3px;
  height: 10px;
  border-left: 1px dotted #333;
  border-right: 1px dotted #333;
}

.palette h3 {
  padding: 10px 3px 6px;
}

.palette ul {
  flex: 1;
  min-height: 0;
  display: grid;
  grid-auto-rows: 1fr;
  list-style: none;
  padding-left: 8px;
  margin: 0 1px -3px 0;
  background: linear-gradient(#aaa, #aaa) 100% 0 / 8px 100% no-repeat;
}

.palette li {
  display: flex;
  align-items: center;
  gap: 2px;
  min-height: 0;
  line-height: 12px;
}

.palette li svg {
  width: 26px;
  height: 26px;
}

.palette li span {
  max-width: 134px;
}

.link {
  stroke: #1418c8;
  stroke-width: 3;
}

.selected svg {
  background: #c8ddf0;
  outline: 1px solid #5a9bd5;
}

.selected span {
  background: #3797f5;
  color: #fff;
}

/* status bar */
.statusbar {
  display: flex;
  height: 18px;
  flex: none;
  align-items: center;
  gap: 4px;
  padding-left: 4px;
  border-top: 1px solid #555;
  background: linear-gradient(#979797, #828282);
  font-family: "Liberation Sans", sans-serif;
  font-size: 9px;
}

.progress {
  position: relative;
  width: 193px;
  height: 14px;
}

.progress progress {
  appearance: none;
  display: block;
  width: 100%;
  height: 100%;
}

progress::-webkit-progress-bar {
  background: #f0f0f0;
}

progress::-webkit-progress-value {
  background: #3399ff;
}

.progress span {
  position: absolute;
  inset: 0;
  text-align: center;
}

/* taskbar */
.taskbar {
  display: flex;
  height: 32px;
  flex: none;
  border-top: 1px solid #777;
  background: linear-gradient(90deg, #0a0a0e 0 3%, #2c2a44 8% 50%, #51635c 51%, #2d3a36 53%, #6f9a8c 56%, #9a9a87 59%, #8f8e7a 66%, #6d6c5c 75%, #727262 90%, #0d0d10 93%);
}

.tasks {
  flex: 1;
  display: flex;
  gap: 3px;
}

.tasks button {
  display: flex;
  justify-content: center;
  align-items: center;
  width: 46px;
}

.tasks button:first-child {
  width: 43px;
}

.tasks .open {
  border: 1px solid #999;
  border-radius: 2px;
  background: linear-gradient(135deg, rgba(255, 255, 255, 0.45), rgba(255, 255, 255, 0.08));
}

.tasks .stacked {
  border-right: 3px double #999;
}

.tasks .current {
  background: linear-gradient(135deg, #ccd3dc, #7b8797);
}

.tasks text {
  font-size: 14px;
  font-weight: bold;
  fill: #c8420f;
}

.tasks .tile-name {
  font-size: 6px;
  fill: #12324e;
}

.current .tile-name {
  fill: #fff;
}

.tray {
  display: flex;
  align-items: center;
  gap: 5px;
}

.tray svg {
  width: 14px;
  height: 14px;
}

.clock {
  display: flex;
  flex-direction: column;
  align-items: center;
  justify-content: center;
  width: 70px;
  color: #fff;
}

.show-desktop {
  width: 11px;
  border: 1px solid #444;
  background: #17171b;
}
```
FILE: script.js
```
const NS = 'http://www.w3.org/2000/svg';
const marks = document.getElementById('marks');
const far = document.getElementById('far-marks');

function line(parent, x1, y1, x2, y2, color, width, dash) {
  const el = document.createElementNS(NS, 'path');
  el.setAttribute('d', `M${x1} ${y1} ${x2} ${y2}`);
  el.setAttribute('stroke', color);
  el.setAttribute('stroke-width', width || 1);
  if (dash) el.setAttribute('stroke-dasharray', dash);
  parent.appendChild(el);
}

// crossing lines between two rails, over the first stretch (in px) of each
function rungs(a, b, n, lenA, lenB, color) {
  const pa = document.getElementById(a);
  const pb = document.getElementById(b);
  for (let i = 1; i <= n; i++) {
    const t = Math.pow(i / n, 1.2);
    const p = pa.getPointAtLength(t * lenA);
    const q = pb.getPointAtLength(t * lenB);
    line(marks, p.x, p.y, q.x, q.y, color);
  }
}

rungs('slope-out', 'slope-in', 9, 36, 58, '#8c5240');
rungs('slope-in', 'ditch-a', 10, 66, 80, '#6a4ab2');
rungs('ditch-a', 'ditch-b', 12, 70, 72, '#4fb862');
rungs('ditch-b', 'shoulder', 10, 72, 120, '#7a42ba');

// section lines on the left bank: slope out, slope in, ditch a, ditch b, shoulder
const left = [
  [20, 503, 53, 532, 110, 547, 141, 547, 200, 532],
  [87, 458, 125, 492, 173, 504, 198, 504, 243, 492],
  [135, 432, 170, 465, 213, 475, 232, 475, 275, 463],
  [172, 414, 202, 443, 240, 452, 256, 452, 292, 442],
  [197, 402, 224, 427, 257, 435, 270, 435, 303, 427],
  [215, 390, 239, 414, 269, 422, 281, 422, 311, 414],
  [228, 381, 252, 405, 277, 410, 287, 410, 315, 403],
  [237, 373, 260, 395, 283, 400, 293, 400, 317, 394]
];
left.forEach((p) => {
  line(marks, p[0], p[1], p[2], p[3], '#8c5240');
  line(marks, p[2], p[3], p[4], p[5], '#7448b4');
  line(marks, p[4], p[5], p[6], p[7], '#5cc46c');
  line(marks, p[6], p[7], p[8], p[9], '#7e40bc');
});
line(marks, 70, 610, 125, 595, '#7e40bc');

const strip = [
  [125, 595, 200, 556], [200, 532, 258, 502], [243, 492, 293, 468], [275, 463, 313, 447],
  [292, 442, 325, 428], [303, 427, 333, 411], [311, 414, 336, 402], [315, 403, 338, 392],
  [317, 394, 339, 384], [317, 386, 338, 377], [315, 378, 335, 371], [312, 372, 332, 366],
  [307, 365, 326, 361], [302, 361, 321, 357], [296, 357, 315, 353], [289, 354, 308, 350],
  [282, 351, 300, 346], [274, 348, 292, 343], [266, 345, 283, 340], [258, 342, 274, 337]
];
strip.forEach((s) => line(marks, s[0], s[1], s[2], s[3], '#dfe0cf'));

// dashed sections across the lanes
const sections = [
  [480, 634, 838, 609], [208, 558, 733, 521], [270, 503, 667, 473],
  [302, 467, 625, 442], [320, 443, 597, 421], [333, 424, 570, 405],
  [340, 411, 550, 393], [343, 401, 530, 385]
];
for (let i = 0; i < 18; i++) {
  const k = i / 18;
  sections.push([342 - 80 * k * k, 393 - 65 * Math.sqrt(k), 515 - 200 * k, 378 - 52 * Math.sqrt(k)]);
}
sections.forEach((s, i) => {
  line(marks, s[0], s[1], s[2], s[3], '#24406f', 1, '3 8');
  line(marks, s[0], s[1], s[2], s[3], '#d6e2f4', 1, i < 8 ? '7 4 6 5 3 4' : '6 3 3 2');
});

// height of a polyline at x
function yAt(points, x) {
  let i = 1;
  while (i < points.length - 1 && points[i][0] < x) i++;
  const [x1, y1] = points[i - 1];
  const [x2, y2] = points[i];
  return y1 + (y2 - y1) * (x - x1) / (x2 - x1);
}

// magenta slope lines on the right bank
const bankTop = [[290, 322], [440, 322], [480, 325], [600, 338], [700, 346], [800, 356], [890, 364], [920, 375]];
const bankLow = [[330, 326], [440, 346], [520, 367], [630, 393], [697, 410], [780, 435], [920, 477]];
for (let i = 0; i < 20; i++) {
  const low = 345 + i * 14 + i * i * 0.3;
  const high = low + 30 + (low - 345) * 0.4;
  line(marks, low, yAt(bankLow, low), high, yAt(bankTop, high), '#7c40c4', i % 3 ? 1 : 2);
}
line(marks, 742, 424, 920, 377, '#7c40c4', 2);
line(marks, 780, 435, 920, 398, '#7c40c4', 2);
line(marks, 845, 453, 920, 432, '#7c40c4', 2);
for (let i = 0; i < 6; i++) {
  line(marks, 575 + i * 12, 388 + i * 6, 920, 503 + i * 14, '#7440a8');
}
for (let i = 1; i < 11; i++) {
  const x = 535 + i * i * 3.4;
  line(marks, x, yAt(bankLow, x) + 3, x + 12 + i * 2, yAt(bankLow, x) + 3, '#58b05c');
}

// overlapping marks where the corridor recedes
let seed = 7;
function rnd() {
  seed = (seed * 16807) % 2147483647;
  return seed / 2147483647;
}
for (let i = 0; i < 560; i++) {
  const x = 100 + rnd() * 360;
  const y = 296 + (x - 100) * 0.13 + (rnd() - 0.4) * 30;
  const w = 3 + rnd() * 12;
  line(far, x, y, x + w, y + w * 0.08, ['#fff', '#c9d8ee', '#27436e', '#5f80b4', '#e8f0fa'][i % 5]);
}
for (let i = 0; i < 40; i++) {
  const x = 96 + i * 3.6;
  const y = 300 + i * 0.85 + rnd() * 4;
  line(far, x, y, x + 5, y + 9, i % 4 ? '#b08468' : '#54506c');
}
```
